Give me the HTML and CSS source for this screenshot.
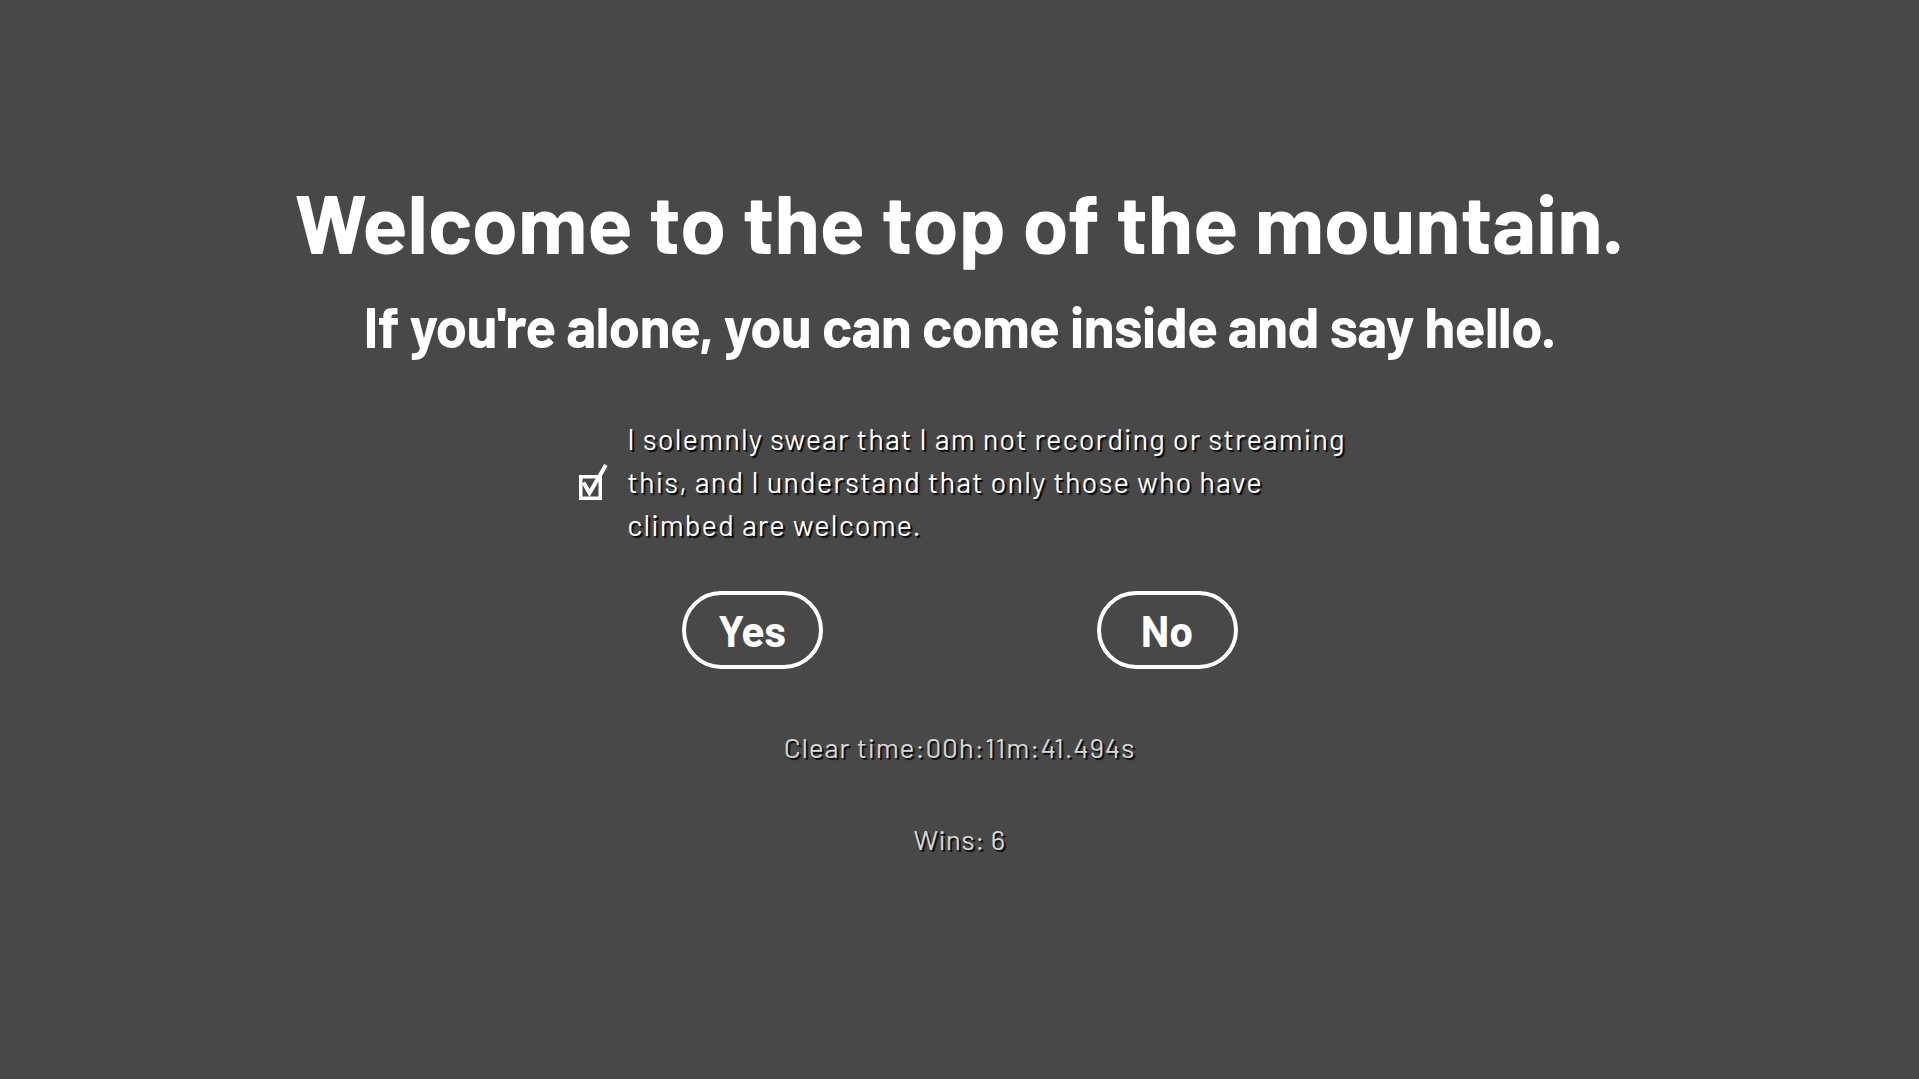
FILE: index.html
```html
<!DOCTYPE html>
<html lang="en">
<head>
<meta charset="utf-8">
<title>Welcome</title>
<link rel="stylesheet" href="styles.css">
</head>
<body>
<main class="screen">
  <h1 class="title">Welcome to the top of the mountain.</h1>
  <h2 class="subtitle">If you're alone, you can come inside and say hello.</h2>
  <label class="oath">
    <svg class="oath-check" width="30" height="38" viewBox="0 0 30 38" aria-hidden="true">
      <rect x="2.75" y="13.75" width="19.5" height="21.5" fill="none" stroke="#fff" stroke-width="3.5"/>
      <polyline points="5.5,19.5 11.5,30 28,2" fill="none" stroke="#fff" stroke-width="4"/>
    </svg>
    <span class="oath-text">I solemnly swear that I am not recording or streaming<br>this, and I understand that only those who have<br>climbed are welcome.</span>
  </label>
  <div class="choices">
    <button class="choice">Yes</button>
    <button class="choice">No</button>
  </div>
  <p class="stat stat-time">Clear time:00h:11m:41.494s</p>
  <p class="stat stat-wins">Wins: 6</p>
</main>
</body>
</html>
```
FILE: styles.css
```css
html, body {
  margin: 0;
  padding: 0;
  height: 100%;
}

body {
  background: #484848;
  color: #ffffff;
  font-family: "Barlow", "DejaVu Sans Condensed", sans-serif;
}

.screen {
  display: flex;
  flex-direction: column;
  align-items: center;
  padding-top: 180px;
}

.title {
  margin: 0;
  font-size: 83px;
  font-weight: 700;
  line-height: 1;
  white-space: nowrap;
}

.subtitle {
  margin: 34px 0 0;
  font-size: 57px;
  font-weight: 700;
  line-height: 1;
  letter-spacing: -0.8px;
  white-space: nowrap;
}

.oath {
  display: flex;
  align-items: center;
  gap: 19px;
  margin-top: 63px;
  padding-left: 5px;
}

.oath-check {
  display: block;
  flex: none;
}

.oath-text {
  font-size: 29px;
  font-weight: 400;
  line-height: 43px;
  letter-spacing: 1.1px;
  text-shadow: 2px 2px 1px rgba(0, 0, 0, 0.9);
}

.choices {
  display: flex;
  gap: 274px;
  margin-top: 45px;
}

.choice {
  box-sizing: border-box;
  width: 141px;
  height: 78px;
  padding: 0;
  border: 4px solid #ffffff;
  border-radius: 40px;
  background: transparent;
  color: #ffffff;
  font-family: inherit;
  font-size: 43px;
  font-weight: 700;
  line-height: 1;
}

.stat {
  margin: 61px 0 0;
  font-size: 28px;
  line-height: 34px;
  letter-spacing: 0.8px;
  color: #d6d6d6;
  text-shadow: 2px 2px 1px rgba(0, 0, 0, 0.85);
}

.stat-wins {
  margin-top: 58px;
  letter-spacing: 0.3px;
}
```
